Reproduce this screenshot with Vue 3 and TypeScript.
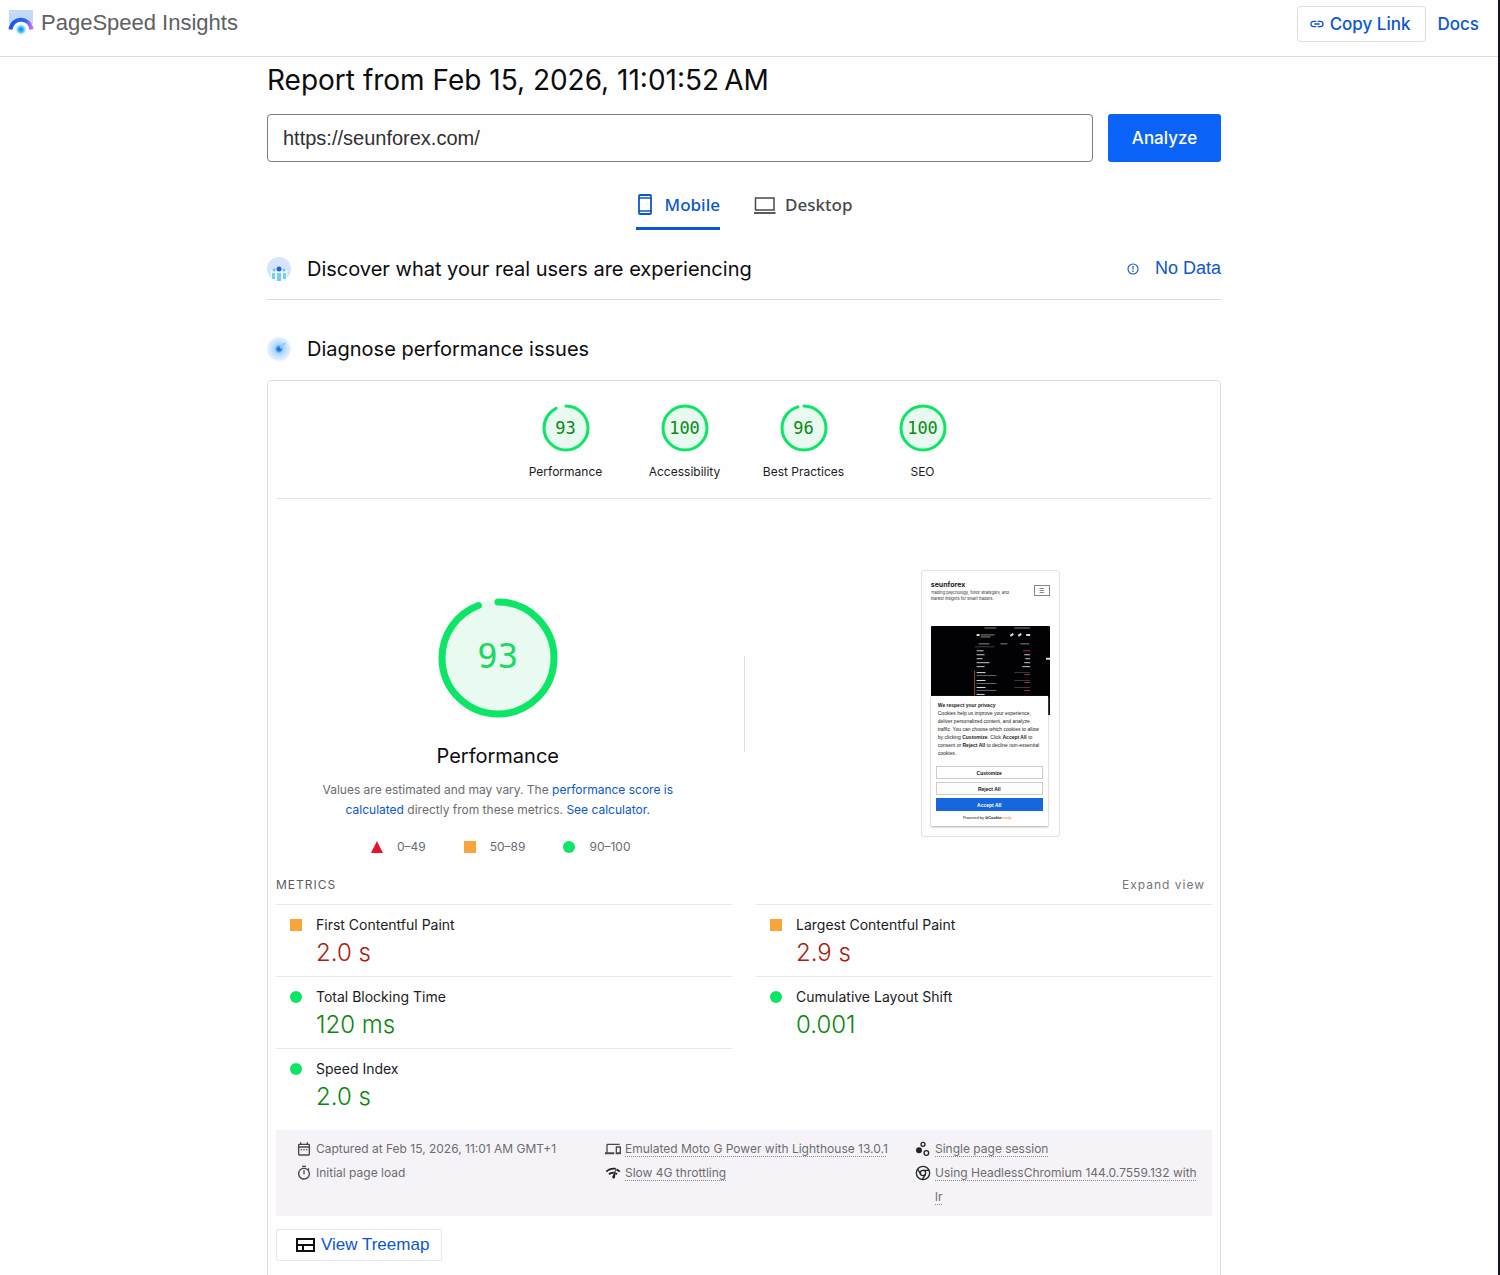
<script setup lang="ts">
import { ref } from 'vue'

interface Score {
  label: string
  value: number
}

interface Metric {
  label: string
  value: string
  rating: 'average' | 'pass'
}

const url = ref('https://seunforex.com/')

const scores: Score[] = [
  { label: 'Performance', value: 93 },
  { label: 'Accessibility', value: 100 },
  { label: 'Best Practices', value: 96 },
  { label: 'SEO', value: 100 },
]

const metrics: Metric[] = [
  { label: 'First Contentful Paint', value: '2.0 s', rating: 'average' },
  { label: 'Largest Contentful Paint', value: '2.9 s', rating: 'average' },
  { label: 'Total Blocking Time', value: '120 ms', rating: 'pass' },
  { label: 'Cumulative Layout Shift', value: '0.001', rating: 'pass' },
  { label: 'Speed Index', value: '2.0 s', rating: 'pass' },
]

// Arc length on a ring whose path length is normalised to 100.
const arc = (value: number): string => (value === 100 ? '100 0' : `${value - 0.5} 100`)
</script>

<template>
  <div class="page">
    <header class="topbar">
      <a class="brand" href="#">
        <svg width="26" height="26" viewBox="0 0 26 26" aria-hidden="true">
          <defs>
            <linearGradient id="arch" x1="0" x2="1">
              <stop offset="0" stop-color="#1a56f0" />
              <stop offset="0.7" stop-color="#2a62f4" />
              <stop offset="1" stop-color="#c76cf5" />
            </linearGradient>
            <radialGradient id="hub">
              <stop offset="0" stop-color="#0a7cf0" />
              <stop offset="0.5" stop-color="#55c4f6" />
              <stop offset="1" stop-color="#bfeefc" stop-opacity="0" />
            </radialGradient>
          </defs>
          <path d="M1 0h24v14H1z" fill="#c4d8f8" />
          <path d="M3 2.500h1M6 2.500h1" stroke="#fff" />
          <path d="M3 20a10 9 0 0 1 20 0z" fill="#fff" />
          <path d="M2.500 19.500C4 7 21.500 6 23.500 19.500" fill="none" stroke="url(#arch)" stroke-width="4" />
          <circle cx="13" cy="19.500" r="6" fill="url(#hub)" />
        </svg>
        <span>PageSpeed Insights</span>
      </a>
      <nav class="actions">
        <button class="copy" type="button">
          <svg width="16" height="16" viewBox="0 0 24 24" fill="currentColor" aria-hidden="true">
            <path d="M3.900 12c0-1.710 1.390-3.100 3.100-3.100h4V7H7a5 5 0 0 0 0 10h4v-1.900H7A3.100 3.100 0 0 1 3.900 12zM8 13h8v-2H8v2zm9-6h-4v1.900h4a3.100 3.100 0 0 1 0 6.200h-4V17h4a5 5 0 0 0 0-10z" />
          </svg>
          Copy Link
        </button>
        <a class="docs" href="#">Docs</a>
      </nav>
    </header>

    <main class="main">
      <div class="content">
        <h1>Report from Feb 15, 2026, 11:01:52&#8239;AM</h1>
        <form class="search" @submit.prevent>
          <input v-model="url" type="text" aria-label="Web page URL" />
          <button type="submit">Analyze</button>
        </form>

        <nav class="tabs">
          <button class="tab active" type="button">
            <svg width="20" height="24" viewBox="0 0 20 24" fill="none" stroke="currentColor" aria-hidden="true">
              <rect x="3" y="3" width="12" height="19" rx="1" stroke-width="1.800" />
              <path d="M3 6h12M3 19h12" stroke-width="1.500" />
            </svg>
            Mobile
          </button>
          <button class="tab" type="button">
            <svg width="22" height="24" viewBox="0 0 22 24" fill="none" stroke="currentColor" aria-hidden="true">
              <rect x="1.500" y="6" width="18.500" height="12" stroke-width="1.500" />
              <path d="M0 21h21.500" stroke-width="1.800" />
            </svg>
            Desktop
          </button>
        </nav>

        <section class="field">
          <svg width="24" height="24" viewBox="1 1 24 24" aria-hidden="true">
            <circle cx="13" cy="13" r="12" fill="#d5e5fb" />
            <path d="M5 14h16v11H5z" fill="#eef8ff" />
            <path d="M6 17h3v6H6zM11 17h4v8h-4zM17 17h3v6h-3z" fill="#76cdf3" />
            <circle cx="8" cy="14" r="1.500" fill="#76bff3" />
            <circle cx="18" cy="14" r="1.500" fill="#76bff3" />
            <circle cx="13" cy="13" r="2.500" fill="#1c65dc" />
          </svg>
          <h2>Discover what your real users are experiencing</h2>
          <a class="nodata" href="#">
            <svg width="14" height="14" viewBox="0 0 14 14" fill="none" stroke="currentColor" aria-hidden="true">
              <circle cx="7" cy="7" r="5" stroke-width="1.100" />
              <path d="M7 4v3.500M7 8.500v1.500" stroke-width="1.200" />
            </svg>
            No Data
          </a>
        </section>

        <section class="diagnose">
          <svg width="24" height="24" viewBox="1 1 24 24" aria-hidden="true">
            <defs>
              <radialGradient id="dot">
                <stop offset="0" stop-color="#0b5fe0" />
                <stop offset="0.180" stop-color="#2f8bec" />
                <stop offset="0.350" stop-color="#a5d4f9" />
                <stop offset="0.700" stop-color="#d0e5fc" />
                <stop offset="1" stop-color="#eaf3fe" />
              </radialGradient>
            </defs>
            <circle cx="13" cy="13" r="12" fill="url(#dot)" />
            <path d="M14 12l5-5" stroke="#8ccbf8" stroke-width="2" />
          </svg>
          <h2>Diagnose performance issues</h2>
        </section>

        <article class="report">
          <div class="scores">
            <a v-for="score in scores" :key="score.label" class="score" href="#">
              <span class="ring">
                <svg viewBox="0 0 48 48" aria-hidden="true">
                  <circle cx="24" cy="24" r="22" fill="#e8faf0" />
                  <circle class="arc" cx="24" cy="24" r="22" pathLength="100" stroke-width="3" :stroke-dasharray="arc(score.value)" />
                </svg>
                <span class="ring-value">{{ score.value }}</span>
              </span>
              <span>{{ score.label }}</span>
            </a>
          </div>

          <div class="overview">
            <div class="summary">
              <div class="ring big">
                <svg viewBox="0 0 120 120" aria-hidden="true">
                  <circle cx="60" cy="60" r="58" fill="#e9faf1" />
                  <circle class="arc" cx="60" cy="60" r="56" pathLength="100" stroke-width="7" stroke-dasharray="94.300 100" />
                </svg>
                <span class="ring-value">93</span>
              </div>
              <h3>Performance</h3>
              <p>
                Values are estimated and may vary. The <a href="#">performance score is calculated</a>
                directly from these metrics. <a href="#">See calculator.</a>
              </p>
              <div class="legend">
                <span><i class="mark fail"></i>0–49</span>
                <span><i class="mark average"></i>50–89</span>
                <span><i class="mark pass"></i>90–100</span>
              </div>
            </div>
            <div class="preview">
              <div class="phone">
                <div class="phone-head">
                  <div>
                    <strong>seunforex</strong>
                    <small>Trading psychology, forex strategies, and market insights for smart traders.</small>
                  </div>
                  <span class="burger">☰</span>
                </div>
                <div class="photo">
                  <svg viewBox="0 0 120 90" aria-hidden="true">
                    <rect width="120" height="90" rx="1" fill="#020204" />
                    <path d="M54 2h12M84 2h16M50 9h14M50 11h10" stroke="#aaa" stroke-width="0.800" />
                    <path d="M46 9h3M80 10l3-2M88 10l3-2M96 9h4M116 33h4" stroke="#ddd" stroke-width="2" />
                    <path d="M48 18h11M70 18h7M90 18h9" stroke="#888" />
                    <path d="M44 21h20" stroke="#666" stroke-width="0.600" />
                    <path d="M46 25h7M46 29h8M46 33h6M46 37h13M46 41h8M94 29h6M95 33h5M94 37h6M92 41h8" stroke="#ccc" />
                    <path d="M93 25h7M94 49h6M94 57h6M94 65h6" stroke="#b0304c" />
                    <path d="M46 47h9M46 55h9M46 62h9M46 69h8" stroke="#ddd" />
                    <path d="M46 50h20M46 58h20M46 65h20" stroke="#667" />
                    <path d="M84 47h16M84 55h16M84 62h16" stroke="#555" stroke-width="0.700" />
                    <path d="M44 45v25" stroke="#a66a4a" stroke-width="0.800" />
                  </svg>
                </div>
                <div class="consent">
                  <b>We respect your privacy</b>
                  <p>
                    Cookies help us improve your experience, deliver personalized content, and analyze traffic. You can
                    choose which cookies to allow by clicking <b>Customize</b>. Click <b>Accept All</b> to consent or
                    <b>Reject All</b> to decline non-essential cookies.
                  </p>
                  <button type="button">Customize</button>
                  <button type="button">Reject All</button>
                  <button class="accept" type="button">Accept All</button>
                  <span class="powered">Powered by <b>⊘Cookie</b><em>ready</em></span>
                </div>
              </div>
            </div>
          </div>

          <div class="metrics-head">
            <span>METRICS</span>
            <button type="button">Expand view</button>
          </div>
          <div class="metrics">
            <div v-for="metric in metrics" :key="metric.label" class="metric" :class="metric.rating">
              <i class="mark" :class="metric.rating"></i>
              <div>
                <div class="metric-label">{{ metric.label }}</div>
                <div class="metric-value">{{ metric.value }}</div>
              </div>
            </div>
          </div>

          <div class="meta">
            <ul>
              <li>
                <svg viewBox="0 0 24 24" aria-hidden="true">
                  <path d="M19 4h-1V2h-2v2H8V2H6v2H5a2 2 0 0 0-2 2v14a2 2 0 0 0 2 2h14a2 2 0 0 0 2-2V6a2 2 0 0 0-2-2zm0 16H5V10h14v10zM5 8V6h14v2H5zm2 4h2v2H7zm4 0h2v2h-2zm4 0h2v2h-2z" />
                </svg>
                <span>Captured at Feb 15, 2026, 11:01 AM GMT+1</span>
              </li>
              <li>
                <svg viewBox="0 0 24 24" aria-hidden="true">
                  <path d="M15 1H9v2h6V1zm-4 13h2V8h-2v6zm8-6.600 1.400-1.400-1.400-1.400L17.600 6A9 9 0 1 0 19 7.400zM12 20a7 7 0 1 1 0-14 7 7 0 0 1 0 14z" />
                </svg>
                <span>Initial page load</span>
              </li>
            </ul>
            <ul>
              <li>
                <svg viewBox="0 0 24 24" aria-hidden="true">
                  <path d="M4 6h18V4H4a2 2 0 0 0-2 2v11H0v3h14v-3H4V6zm19 2h-6a1 1 0 0 0-1 1v10a1 1 0 0 0 1 1h6a1 1 0 0 0 1-1V9a1 1 0 0 0-1-1zm-1 9h-4v-7h4v7z" />
                </svg>
                <a href="#">Emulated Moto G Power with Lighthouse 13.0.1</a>
              </li>
              <li>
                <svg class="dark" viewBox="0 0 24 24" aria-hidden="true">
                  <path d="M1 9l2 2c3.400-3.400 8-4.700 12.300-3.900l1.200-2.700C11.100 3.100 5.200 4.700 1 9zm20 2 2-2c-1.600-1.600-3.500-2.800-5.500-3.600l-.8 2.800c1.600.6 3 1.600 4.300 2.800zm-4 4 2-2c-.8-.8-1.700-1.400-2.600-1.900l-.8 2.700zM5 13l2 2a7 7 0 0 1 5.600-2l1.200-2.800C10.700 9.700 7.400 10.700 5 13zM16.600 5l-5.700 12.600A2.100 2.100 0 1 0 15 18.700z" />
                </svg>
                <a href="#">Slow 4G throttling</a>
              </li>
            </ul>
            <ul>
              <li>
                <svg class="dark" viewBox="0 0 24 24" aria-hidden="true">
                  <circle cx="6" cy="14" r="4.500" />
                  <circle class="open" cx="12" cy="5" r="3" stroke="currentColor" stroke-width="2" />
                  <circle class="open" cx="17" cy="18" r="3.500" stroke="currentColor" stroke-width="2" />
                </svg>
                <a href="#">Single page session</a>
              </li>
              <li>
                <svg class="dark" viewBox="0 0 24 24" stroke="currentColor" stroke-width="2" aria-hidden="true">
                  <circle class="open" cx="12" cy="12" r="10" />
                  <circle class="open" cx="12" cy="12" r="4" />
                  <path class="open" d="M12 8h9.500M8.500 14 4 6M15.500 14 11 22" />
                </svg>
                <a href="#">Using HeadlessChromium 144.0.7559.132 with lr</a>
              </li>
            </ul>
          </div>

          <button class="treemap" type="button">
            <svg width="20" height="16" viewBox="0 0 20 16" fill="none" stroke="#111" stroke-width="2" aria-hidden="true">
              <path d="M2 2h17v12H2zM2 8h17M8 8v6" />
            </svg>
            View Treemap
          </button>
        </article>
      </div>
    </main>
  </div>
</template>

<style>
body {
  margin: 0;
  background: #fefefe;
}
</style>

<style scoped>
.page {
  box-sizing: border-box;
  display: flex;
  flex-direction: column;
  min-height: 100vh;
  border-right: 2px solid #16161a;
  color: #1b1b1f;
  font-family: Inter, 'Liberation Sans', sans-serif;
}
.page * {
  box-sizing: border-box;
}
a {
  color: #0b57d0;
  text-decoration: none;
}
button {
  padding: 0;
  border: 0;
  background: none;
  color: #0b57d0;
  font-family: inherit;
  cursor: pointer;
}
svg {
  flex: none;
  display: block;
}
h1,
h2,
h3,
p,
ul {
  margin: 0;
  padding: 0;
  font-weight: 400;
}

.topbar {
  display: flex;
  align-items: center;
  justify-content: space-between;
  height: 57px;
  padding: 0 19px 8px 8px;
  border-bottom: 1px solid #dcdcde;
}
.brand {
  display: flex;
  align-items: center;
  gap: 7px;
  padding-bottom: 2px;
  color: #5f6064;
  font: 22px/26px 'Liberation Sans', sans-serif;
}
.actions {
  display: flex;
  align-items: center;
  gap: 11px;
}
.copy {
  display: flex;
  align-items: center;
  justify-content: center;
  gap: 5px;
  height: 36px;
  padding: 0 15px 0 11px;
  border: 1px solid #dcdde2;
  border-radius: 4px;
}
.copy,
.docs {
  font-size: 17px;
  font-weight: 500;
}

.main {
  flex: 1;
  display: flex;
  justify-content: center;
  padding-right: 10px;
}
.content {
  display: flex;
  flex-direction: column;
  width: 100%;
  max-width: 954px;
}
h1 {
  margin-top: 5px;
  color: #0c0c0e;
  font-size: 28px;
  line-height: 36px;
}
.search {
  display: flex;
  gap: 15px;
  margin-top: 16px;
}
.search input {
  flex: 1;
  height: 48px;
  padding: 0 15px;
  border: 1px solid #7c7c80;
  border-radius: 4px;
  background: #fefefe;
  color: #303034;
  font: 20px 'Liberation Sans', sans-serif;
}
.search button {
  width: 113px;
  border-radius: 3px;
  background: #0b62f8;
  color: #fff;
  font-size: 17px;
  font-weight: 500;
}
.tabs {
  display: flex;
  justify-content: center;
  gap: 34px;
  margin-top: 25px;
}
.tab {
  display: flex;
  align-items: center;
  gap: 9px;
  height: 43px;
  padding-bottom: 6px;
  border-bottom: 3px solid transparent;
  color: #48484c;
  font: 500 17px 'Noto Sans', sans-serif;
}
.tab.active {
  border-color: #0b57d0;
  color: #0b57d0;
}
.field,
.diagnose {
  display: flex;
  align-items: center;
  gap: 16px;
}
.field {
  height: 70px;
  padding-top: 8px;
  border-bottom: 1px solid #dcdcde;
}
.diagnose {
  height: 80px;
  padding-top: 18px;
}
h2 {
  color: #0c0c0e;
  font-size: 20px;
  line-height: 28px;
}
.nodata {
  display: flex;
  align-items: center;
  gap: 15px;
  margin-left: auto;
  font: 18px 'Liberation Sans', sans-serif;
}

.report {
  flex: 1;
  padding: 0 8px 14px;
  border: 1px solid #dcdce0;
  border-bottom: 0;
  border-radius: 5px 5px 0 0;
}
.scores {
  display: flex;
  justify-content: center;
  height: 118px;
  padding-top: 23px;
  border-bottom: 1px solid #e2e2e4;
}
.score {
  display: flex;
  flex-direction: column;
  align-items: center;
  gap: 11px;
  width: 119px;
  color: #1b1b1f;
  font-size: 12px;
  line-height: 18px;
}
.ring {
  position: relative;
  width: 48px;
  height: 48px;
}
.ring svg {
  width: 100%;
  height: 100%;
}
.arc {
  fill: none;
  stroke: #0ce565;
  stroke-linecap: round;
  transform: rotate(-90deg);
  transform-origin: center;
}
.ring-value {
  position: absolute;
  inset: 0;
  display: flex;
  align-items: center;
  justify-content: center;
  color: #0a8a14;
  font: 17px 'DejaVu Sans Mono', monospace;
}
.big {
  width: 120px;
  height: 120px;
}
.big .ring-value {
  bottom: 4px;
  color: #1cd964;
  font-size: 34px;
}

.overview {
  display: flex;
  padding-top: 71px;
}
.summary,
.preview {
  flex: 1;
  display: flex;
  flex-direction: column;
  align-items: center;
}
.summary {
  padding: 28px 24px 0 0;
}
.summary h3 {
  margin-top: 23px;
  color: #0c0c0e;
  font-size: 20px;
  line-height: 30px;
}
.summary p {
  max-width: 360px;
  margin-top: 9px;
  color: #6c6c70;
  font-size: 12px;
  line-height: 20px;
  text-align: center;
}
.legend {
  display: flex;
  gap: 38px;
  margin: 17px 0 18px;
  padding-left: 6px;
  color: #6c6c70;
  font-size: 12px;
  line-height: 20px;
}
.legend span {
  display: flex;
  align-items: center;
  gap: 14px;
}
.mark {
  flex: none;
  width: 12px;
  height: 12px;
}
.mark.fail {
  background: #e5142c;
  clip-path: polygon(50% 0, 100% 100%, 0 100%);
}
.mark.average {
  background: #f6a63a;
}
.mark.pass {
  border-radius: 50%;
  background: #0ce565;
}
.preview {
  padding-left: 25px;
  background: linear-gradient(#dededf, #dededf) 0 86px / 1px 96px no-repeat;
}
.phone {
  width: 139px;
  height: 267px;
  padding: 8px 9px;
  border: 1px solid #e2e2e4;
  border-radius: 3px;
}
.phone-head {
  display: flex;
  justify-content: space-between;
  height: 47px;
}
.phone-head strong {
  display: block;
  font-size: 7px;
  line-height: 11px;
}
.phone-head small {
  display: block;
  width: 88px;
  font-size: 4px;
  line-height: 6px;
}
.burger {
  width: 16px;
  height: 11px;
  margin-top: 6px;
  border: 1px solid #888;
  font-size: 6px;
  line-height: 9px;
  text-align: center;
}
.photo {
  height: 70px;
}
.consent {
  position: relative;
  display: flex;
  flex-direction: column;
  width: 117px;
  height: 130px;
  padding: 5px 5px 0;
  background: #fefefe;
  box-shadow: 0 1px 2px #aaa;
  color: #222;
  font-family: 'Liberation Sans', sans-serif;
  font-size: 5px;
  line-height: 8px;
}
.consent > b,
.consent p {
  padding-left: 2px;
}
.consent p {
  max-width: none;
  margin-bottom: 9px;
}
.consent button {
  height: 13px;
  margin-bottom: 3px;
  border: 1px solid #ccc;
  color: #111;
  font-size: 5px;
  font-weight: 700;
  line-height: 8px;
}
.consent .accept {
  border: 0;
  background: #1767dc;
  color: #fff;
}
.powered {
  padding-right: 4px;
  font-size: 4px;
  text-align: center;
}
.powered em {
  color: #e08040;
}

.metrics-head {
  display: flex;
  justify-content: space-between;
  height: 29px;
  padding-right: 7px;
  color: #5c5c60;
  font-size: 12px;
  line-height: 20px;
  letter-spacing: 1px;
}
.metrics-head button {
  height: 20px;
  color: #747478;
  font-size: 12px;
  line-height: 20px;
  letter-spacing: 1px;
}
.metrics {
  display: grid;
  grid-template-columns: 1fr 1fr;
  column-gap: 24px;
}
.metric {
  display: flex;
  gap: 14px;
  height: 72px;
  padding: 10px 14px 0;
  border-top: 1px solid #e8e8ea;
}
.metric .mark {
  margin-top: 4px;
}
.metric-label {
  font-size: 14px;
  line-height: 20px;
}
.metric-value {
  font-size: 24px;
  font-weight: 300;
  line-height: 36px;
}
.metric.average .metric-value {
  color: #a8200e;
}
.metric.pass .metric-value {
  color: #0a860c;
}

.meta {
  display: grid;
  grid-template-columns: 309px 310px 1fr;
  margin-top: 10px;
  padding: 7px 8px 7px 20px;
  background: #f5f3f7;
  color: #6c6c70;
  font-size: 12px;
  line-height: 24px;
}
.meta ul {
  list-style: none;
}
.meta li {
  display: flex;
  gap: 4px;
}
.meta svg {
  width: 16px;
  height: 16px;
  margin-top: 4px;
  color: #48484c;
  fill: currentColor;
}
.meta .dark {
  color: #242428;
}
.meta .open {
  fill: none;
}
.meta a {
  color: #6c6c70;
  text-decoration: underline dotted #8c8c90;
  text-underline-offset: 3px;
}
.treemap {
  display: flex;
  align-items: center;
  gap: 6px;
  height: 32px;
  margin-top: 13px;
  padding: 0 12px 0 18px;
  border: 1px solid #e8e8ec;
  border-radius: 2px;
  font: 17px 'Liberation Sans', sans-serif;
}
</style>
